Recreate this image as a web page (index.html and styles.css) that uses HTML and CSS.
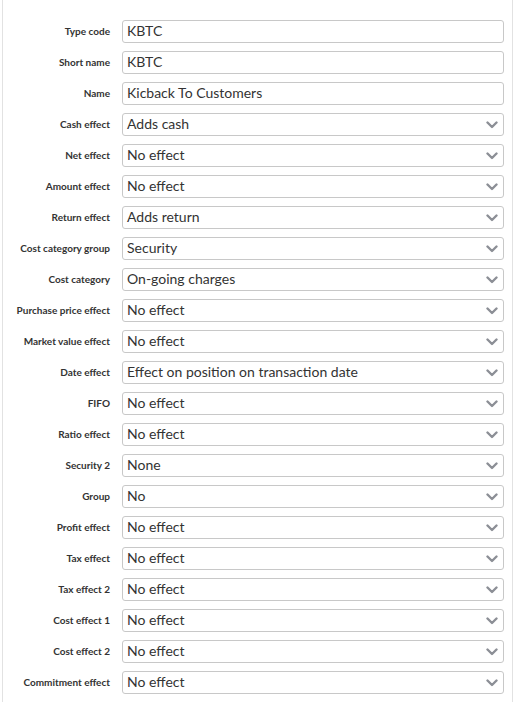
FILE: index.html
```html
<!DOCTYPE html>
<html>
<head>
<meta charset="utf-8">
<link rel="stylesheet" href="styles.css">
</head>
<body>
<div class="panel">
  <div class="row"><label class="lbl">Type code</label><div class="field">KBTC</div></div>
  <div class="row"><label class="lbl">Short name</label><div class="field">KBTC</div></div>
  <div class="row"><label class="lbl">Name</label><div class="field">Kicback To Customers</div></div>
  <div class="row"><label class="lbl">Cash effect</label><div class="field select"><span>Adds cash</span><svg class="chev" viewBox="0 0 12 8"><path d="M1.5 1.5 L6 6 L10.5 1.5"/></svg></div></div>
  <div class="row"><label class="lbl">Net effect</label><div class="field select"><span>No effect</span><svg class="chev" viewBox="0 0 12 8"><path d="M1.5 1.5 L6 6 L10.5 1.5"/></svg></div></div>
  <div class="row"><label class="lbl">Amount effect</label><div class="field select"><span>No effect</span><svg class="chev" viewBox="0 0 12 8"><path d="M1.5 1.5 L6 6 L10.5 1.5"/></svg></div></div>
  <div class="row"><label class="lbl">Return effect</label><div class="field select"><span>Adds return</span><svg class="chev" viewBox="0 0 12 8"><path d="M1.5 1.5 L6 6 L10.5 1.5"/></svg></div></div>
  <div class="row"><label class="lbl">Cost category group</label><div class="field select"><span>Security</span><svg class="chev" viewBox="0 0 12 8"><path d="M1.5 1.5 L6 6 L10.5 1.5"/></svg></div></div>
  <div class="row"><label class="lbl">Cost category</label><div class="field select"><span>On-going charges</span><svg class="chev" viewBox="0 0 12 8"><path d="M1.5 1.5 L6 6 L10.5 1.5"/></svg></div></div>
  <div class="row"><label class="lbl">Purchase price effect</label><div class="field select"><span>No effect</span><svg class="chev" viewBox="0 0 12 8"><path d="M1.5 1.5 L6 6 L10.5 1.5"/></svg></div></div>
  <div class="row"><label class="lbl">Market value effect</label><div class="field select"><span>No effect</span><svg class="chev" viewBox="0 0 12 8"><path d="M1.5 1.5 L6 6 L10.5 1.5"/></svg></div></div>
  <div class="row"><label class="lbl">Date effect</label><div class="field select"><span>Effect on position on transaction date</span><svg class="chev" viewBox="0 0 12 8"><path d="M1.5 1.5 L6 6 L10.5 1.5"/></svg></div></div>
  <div class="row"><label class="lbl">FIFO</label><div class="field select"><span>No effect</span><svg class="chev" viewBox="0 0 12 8"><path d="M1.5 1.5 L6 6 L10.5 1.5"/></svg></div></div>
  <div class="row"><label class="lbl">Ratio effect</label><div class="field select"><span>No effect</span><svg class="chev" viewBox="0 0 12 8"><path d="M1.5 1.5 L6 6 L10.5 1.5"/></svg></div></div>
  <div class="row"><label class="lbl">Security 2</label><div class="field select"><span>None</span><svg class="chev" viewBox="0 0 12 8"><path d="M1.5 1.5 L6 6 L10.5 1.5"/></svg></div></div>
  <div class="row"><label class="lbl">Group</label><div class="field select"><span>No</span><svg class="chev" viewBox="0 0 12 8"><path d="M1.5 1.5 L6 6 L10.5 1.5"/></svg></div></div>
  <div class="row"><label class="lbl">Profit effect</label><div class="field select"><span>No effect</span><svg class="chev" viewBox="0 0 12 8"><path d="M1.5 1.5 L6 6 L10.5 1.5"/></svg></div></div>
  <div class="row"><label class="lbl">Tax effect</label><div class="field select"><span>No effect</span><svg class="chev" viewBox="0 0 12 8"><path d="M1.5 1.5 L6 6 L10.5 1.5"/></svg></div></div>
  <div class="row"><label class="lbl">Tax effect 2</label><div class="field select"><span>No effect</span><svg class="chev" viewBox="0 0 12 8"><path d="M1.5 1.5 L6 6 L10.5 1.5"/></svg></div></div>
  <div class="row"><label class="lbl">Cost effect 1</label><div class="field select"><span>No effect</span><svg class="chev" viewBox="0 0 12 8"><path d="M1.5 1.5 L6 6 L10.5 1.5"/></svg></div></div>
  <div class="row"><label class="lbl">Cost effect 2</label><div class="field select"><span>No effect</span><svg class="chev" viewBox="0 0 12 8"><path d="M1.5 1.5 L6 6 L10.5 1.5"/></svg></div></div>
  <div class="row"><label class="lbl">Commitment effect</label><div class="field select"><span>No effect</span><svg class="chev" viewBox="0 0 12 8"><path d="M1.5 1.5 L6 6 L10.5 1.5"/></svg></div></div>
</div>
</body>
</html>
```
FILE: styles.css
```css
html, body {
  margin: 0;
  padding: 0;
  background: #fff;
}
body {
  font-family: Lato, "Open Sans", sans-serif;
  color: #333;
}
.panel {
  margin: 0 4px 0 2px;
  border-left: 1px solid #e2e2e2;
  border-right: 1px solid #e2e2e2;
  padding: 20px 8px 20px 0;
  min-height: 662px;
  display: flex;
  flex-direction: column;
  gap: 8px;
}
.row {
  display: grid;
  grid-template-columns: 107px 1fr;
  column-gap: 12px;
  align-items: center;
}
.lbl {
  text-align: right;
  font-size: 10px;
  font-weight: 700;
  color: #333;
  white-space: nowrap;
  padding-bottom: 2px;
}
.field {
  height: 23px;
  box-sizing: border-box;
  border: 1px solid #c8c8c8;
  border-radius: 3px;
  padding: 0 4px 2px 4px;
  font-size: 14px;
  line-height: 19px;
  color: #333;
  display: flex;
  align-items: center;
  justify-content: space-between;
  white-space: nowrap;
}
.chev {
  width: 12px;
  height: 8px;
  margin-right: 1px;
  margin-top: 2px;
  flex: none;
}
.chev path {
  fill: none;
  stroke: #8c8f96;
  stroke-width: 2.4;
  stroke-linecap: round;
  stroke-linejoin: round;
}
```
